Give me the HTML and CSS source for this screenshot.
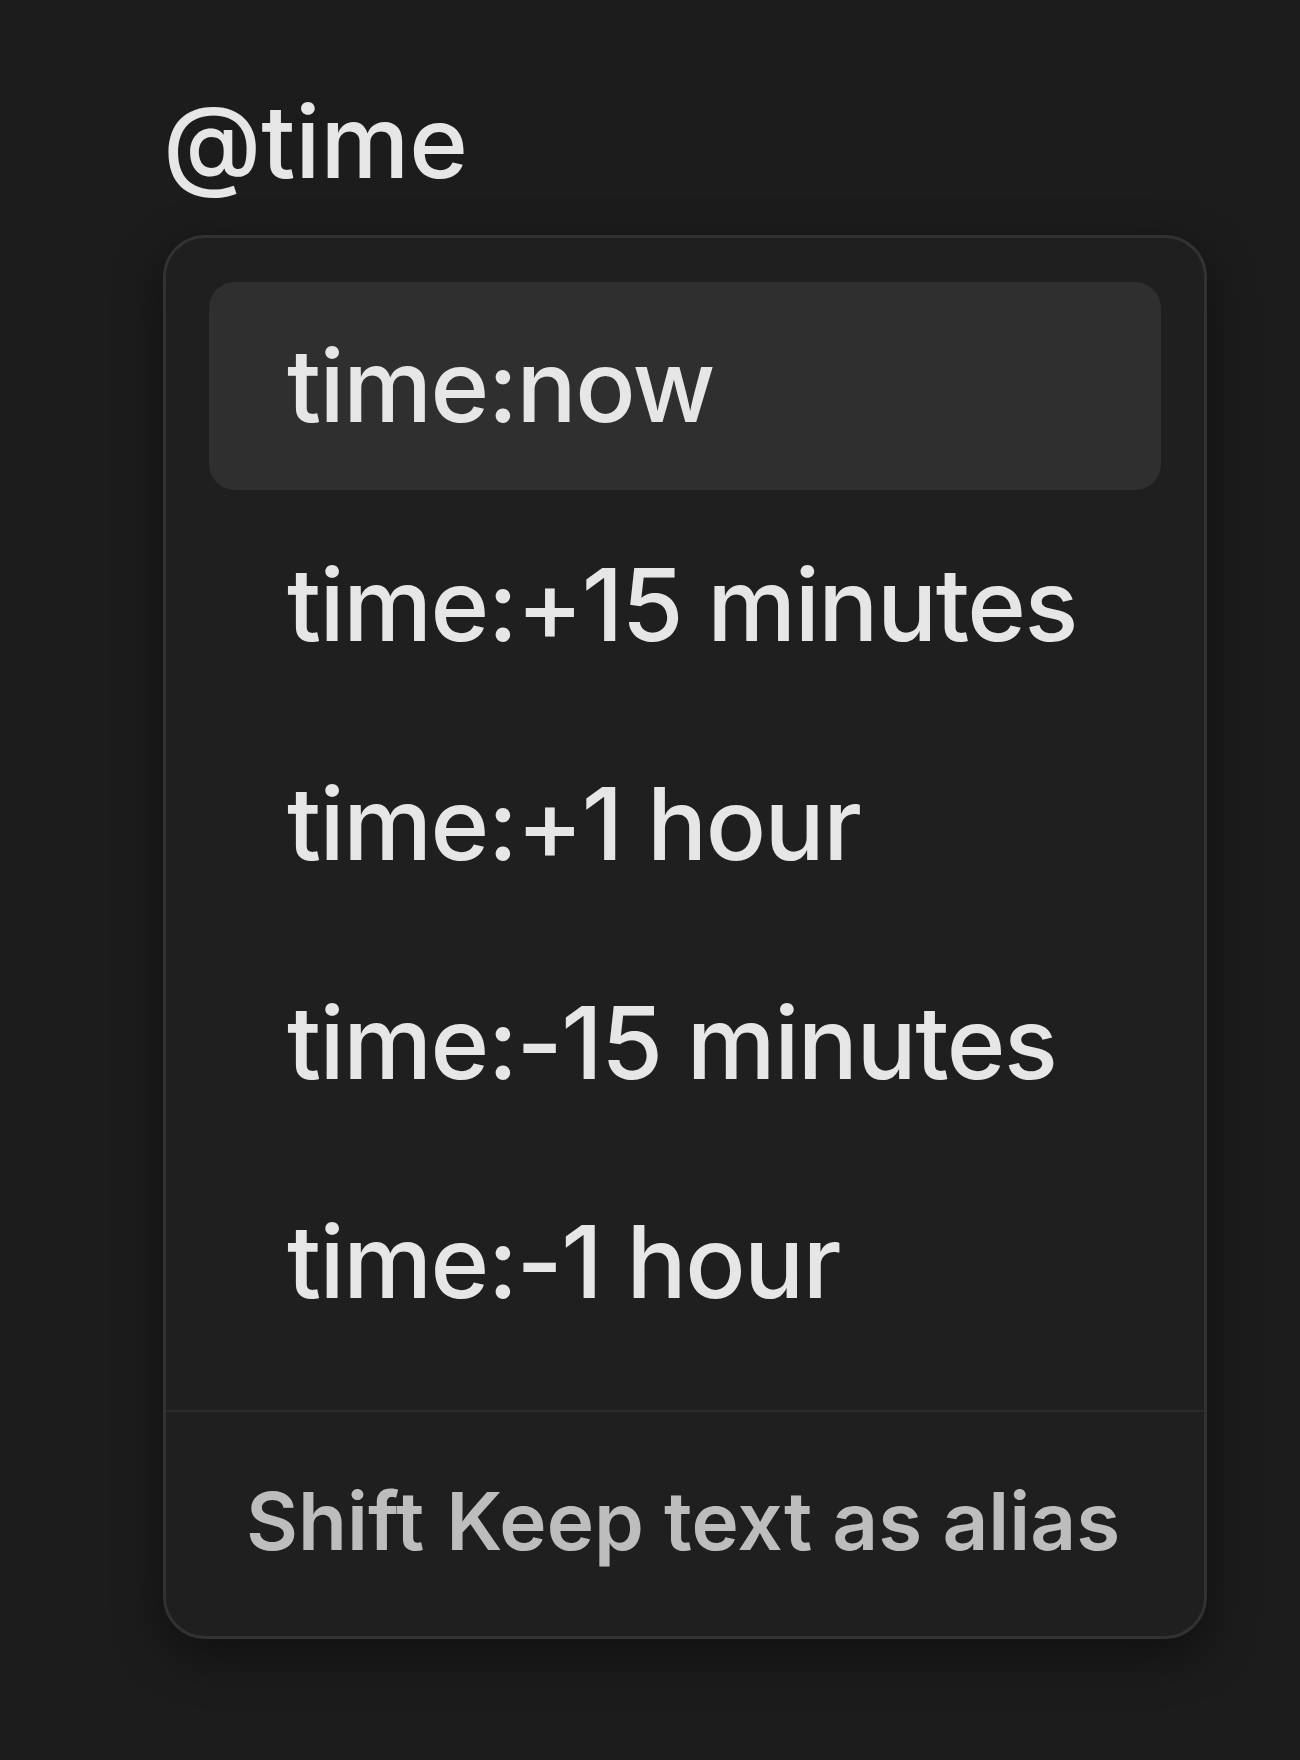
FILE: index.html
```html
<!DOCTYPE html>
<html lang="en">
<head>
<meta charset="utf-8">
<title>@time</title>
<link rel="stylesheet" href="styles.css">
</head>
<body>
<div class="page">
  <div class="query">@time</div>
  <div class="popup">
    <ul class="list">
      <li class="item active">time:now</li>
      <li class="item">time:+15 minutes</li>
      <li class="item">time:+1 hour</li>
      <li class="item">time:-15 minutes</li>
      <li class="item">time:-1 hour</li>
    </ul>
    <div class="footer"><span class="key">Shift</span> Keep text as alias</div>
  </div>
</div>
</body>
</html>
```

FILE: styles.css
```css
html, body {
  margin: 0;
  padding: 0;
  background: #1c1c1c;
}
body {
  font-family: Inter, "Noto Sans", "Liberation Sans", sans-serif;
  color: #e6e6e6;
  width: 1300px;
  height: 1760px;
  overflow: hidden;
}
.page {
  padding: 82px 0 0 163px;
}
.query {
  font-size: 100px;
  line-height: 120px;
  font-weight: 500;
  color: #e6e6e6;
  margin-bottom: 33px;
}
.popup {
  width: 1038px;
  border: 3px solid #323232;
  border-radius: 42px;
  background: #1f1f1f;
  box-shadow: 0 16px 50px rgba(0, 0, 0, 0.45);
}
.list {
  list-style: none;
  margin: 0;
  padding: 44px 43px 44px 43px;
  display: flex;
  flex-direction: column;
  gap: 11px;
  border-bottom: 2px solid #2a2a2a;
}
.item {
  height: 208px;
  display: flex;
  align-items: center;
  padding-left: 78px;
  border-radius: 26px;
  font-size: 100px;
  line-height: 120px;
  font-weight: 500;
  letter-spacing: -1.5px;
  color: #e6e6e6;
}
.item.active {
  background: #2f2f2f;
}
.footer {
  height: 217px;
  padding-bottom: 7px;
  display: flex;
  align-items: center;
  padding-left: 80px;
  font-size: 80px;
  line-height: 96px;
  font-weight: 600;
  color: #bdbdbd;
}
.key {
  margin-right: 22px;
}
```
